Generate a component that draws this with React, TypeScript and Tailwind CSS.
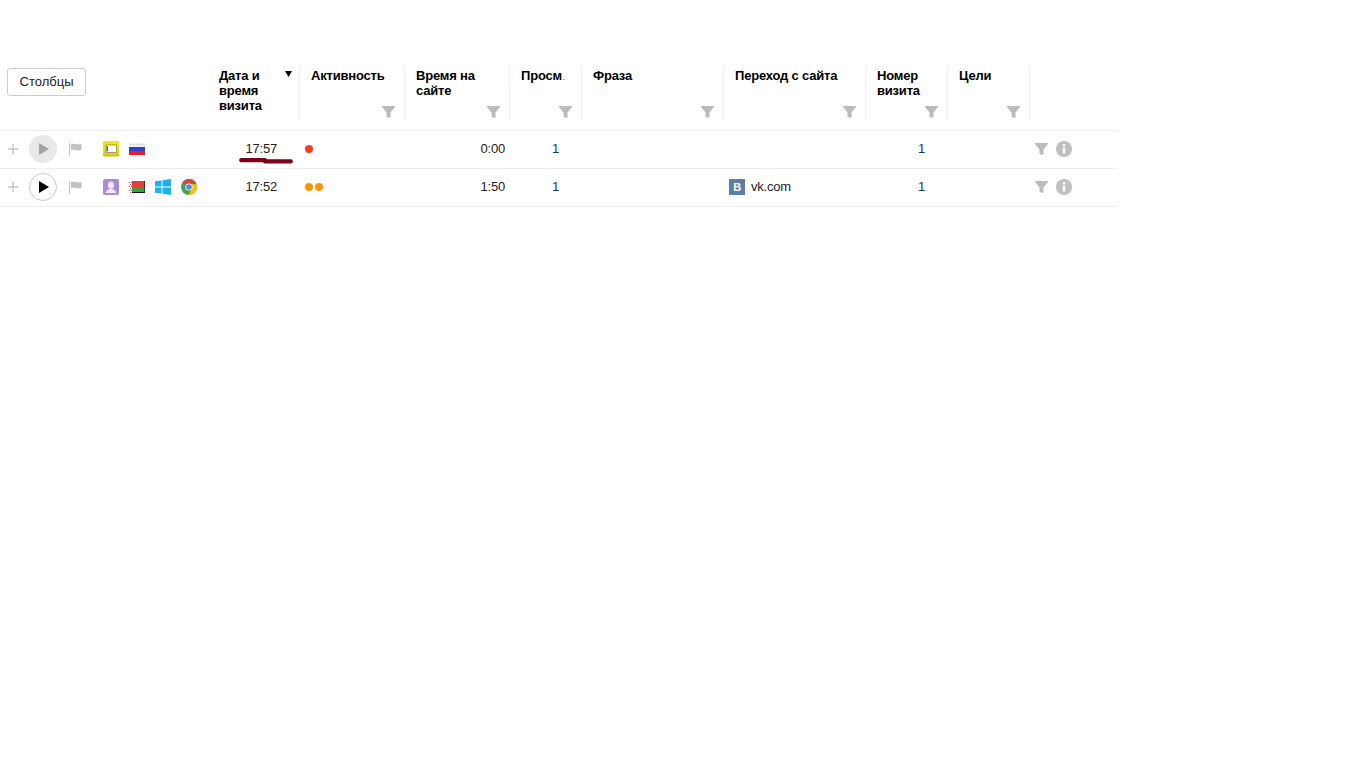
const cols = "grid grid-cols-[208px_92px_105px_105px_72px_142px_142px_82px_82px_88px]";

function Funnel() {
  return (
    <svg width="13" height="12" viewBox="0 0 13 12" className="block shrink-0">
      <path d="M0 0H13V1L8.5 6.5V12L4.5 11V6.5L0 1Z" fill="#bcbcbc" />
    </svg>
  );
}

function Head({ label, dotted, sorted, noFilter, pr }: { label: string; dotted?: boolean; sorted?: boolean; noFilter?: boolean; pr?: string }) {
  return (
    <div className="relative flex h-[54px] flex-col border-r border-[#eeeeee] pl-[11px] pr-[9px] pt-[2px]">
      <div className={`font-bold leading-[15px] tracking-[-0.2px] text-black ${pr ?? ""}`}>
        {label}
        {dotted && <span className="font-normal text-[#999999]">.</span>}
      </div>
      {sorted && (
        <svg width="7" height="6" viewBox="0 0 7 6" className="absolute right-[7px] top-[5px]">
          <path d="M0 0H7L3.5 6Z" fill="#000000" />
        </svg>
      )}
      {!noFilter && (
        <div className="mb-[2px] mt-auto self-end">
          <Funnel />
        </div>
      )}
    </div>
  );
}

function Plus() {
  return (
    <svg width="10" height="10" viewBox="0 0 10 10" className="block">
      <path d="M5 0V10M0 5H10" stroke="#c4c4c4" strokeWidth="1.4" />
    </svg>
  );
}

function Play({ active }: { active: boolean }) {
  return (
    <div className={`flex h-[28px] w-[28px] items-center justify-center rounded-full ${active ? "border border-[#c9c9c9] bg-white" : "bg-[#e8e8e8]"}`}>
      <svg width="10" height="12" viewBox="0 0 10 12" className="ml-[1px] block">
        <path d="M0 0L10 6L0 12Z" fill={active ? "#000000" : "#a3a3a3"} />
      </svg>
    </div>
  );
}

function Flag() {
  return (
    <svg width="13" height="13" viewBox="0 0 13 13" className="block">
      <path d="M0.5 0V13" stroke="#c2c2c2" strokeWidth="1" />
      <path d="M2 1.2C5 0 7 2.4 12.5 1V7C7 8.4 5 6 2 7.2Z" fill="#c2c2c2" />
    </svg>
  );
}

function YellowIcon() {
  return (
    <svg width="16" height="16" viewBox="0 0 16 16" className="block">
      <defs>
        <linearGradient id="yg" x1="0" y1="0" x2="0" y2="1">
          <stop offset="0" stopColor="#f4ea00" />
          <stop offset="0.7" stopColor="#ece000" />
          <stop offset="1" stopColor="#c8bc20" />
        </linearGradient>
      </defs>
      <rect width="16" height="15.5" rx="1" fill="url(#yg)" />
      <rect x="3" y="4" width="10.5" height="7.5" fill="#ffffff" stroke="#8a8a70" strokeWidth="0.8" />
      <rect x="3.6" y="5.2" width="1.2" height="5" fill="#444444" />
    </svg>
  );
}

function Russia() {
  return (
    <svg width="16" height="12" viewBox="0 0 16 12" className="block">
      <rect width="16" height="4" fill="#f0f0f0" />
      <rect y="1" width="16" height="1" fill="#dddddd" />
      <rect y="4" width="16" height="4" fill="#2a3fd8" />
      <rect y="8" width="16" height="4" fill="#ee1c25" />
    </svg>
  );
}

function Belarus() {
  return (
    <svg width="16" height="12" viewBox="0 0 16 12" className="block">
      <rect width="16" height="12" fill="#111111" />
      <rect x="0" y="0" width="15.4" height="7" fill="#ee3b3b" />
      <rect x="0" y="7" width="15.4" height="4" fill="#3f9e3f" />
      <rect x="0" y="0" width="3" height="12" fill="#ffffff" />
      <path d="M0 1H1V2H0ZM2 1H3V2H2ZM1 3H2V4H1ZM0 5H1V6H0ZM2 5H3V6H2ZM1 7H2V8H1ZM0 9H1V10H0ZM2 9H3V10H2ZM1 11H2V12H1Z" fill="#e8424a" />
    </svg>
  );
}

function Person() {
  return (
    <svg width="16" height="16" viewBox="0 0 16 16" className="block">
      <rect width="16" height="16" rx="2" fill="#ab8ad8" />
      <ellipse cx="8" cy="6.2" rx="3" ry="3.6" fill="#efe7f8" />
      <path d="M2.5 14C3 11.4 5.6 11 6.6 9.8H9.4C10.4 11 13 11.4 13.5 14Z" fill="#efe7f8" />
    </svg>
  );
}

function Windows() {
  return (
    <svg width="16" height="16" viewBox="0 0 16 16" className="block">
      <path d="M0 2.3L6.6 1.4V7.6H0ZM7.5 1.2L16 0V7.6H7.5ZM0 8.5H6.6V14.6L0 13.7ZM7.5 8.5H16V16L7.5 14.8Z" fill="#1cb1ec" />
    </svg>
  );
}

function Chrome() {
  return (
    <svg width="16" height="16" viewBox="0 0 16 16" className="block">
      <circle cx="8" cy="8" r="8" fill="#4a9e4f" />
      <path d="M8 0A8 8 0 0 1 15.4 5H8A3 3 0 0 0 5.2 6.9L2 2.6A8 8 0 0 1 8 0Z" fill="#db4437" />
      <path d="M15.4 5A8 8 0 0 1 7.4 16L10.6 10A3 3 0 0 0 11 8 3 3 0 0 0 10 5.4Z" fill="#f4c20d" />
      <circle cx="8" cy="8" r="3.6" fill="#ffffff" />
      <circle cx="8" cy="8" r="2.8" fill="#4b87e6" />
    </svg>
  );
}

function Info() {
  return (
    <svg width="16" height="16" viewBox="0 0 16 16" className="block">
      <circle cx="8" cy="8" r="8" fill="#bfbfbf" />
      <rect x="6.8" y="3" width="2.4" height="2.4" fill="#ffffff" />
      <rect x="6.8" y="6.6" width="2.4" height="6" fill="#ffffff" />
    </svg>
  );
}

function VK() {
  return (
    <span className="flex h-[16px] w-[16px] items-center justify-center bg-[#5b7fa6] text-[11px] font-bold leading-none text-white">
      B
    </span>
  );
}

function Dot({ color }: { color: string }) {
  return <span className={`block h-[8px] w-[8px] rounded-full ${color}`} />;
}

function Row({ active, icons, time, dots, duration, referer, underline }: { active: boolean; icons: React.ReactNode; time: string; dots: string[]; duration: string; referer?: boolean; underline?: boolean }) {
  return (
    <div className={`${cols} h-[38px] items-center border-b border-[#eeeeee] pb-[1px] leading-[16px] tracking-[-0.2px]`}>
      <div className="flex items-center pl-[8px]">
        <Plus />
        <div className="ml-[11px]"><Play active={active} /></div>
        <div className="ml-[12px]"><Flag /></div>
        <div className="ml-[21px] flex items-center gap-[10px]">{icons}</div>
      </div>
      <div className="relative pr-[23px] text-right text-[#222222]">
        {time}
        {underline && (
          <svg width="54" height="7" viewBox="0 0 54 7" className="absolute left-[31px] top-[17px]">
            <path d="M2.2 2.2H26M26 3.4H51.8" stroke="#7b0019" strokeWidth="4.2" strokeLinecap="round" />
          </svg>
        )}
      </div>
      <div className="flex gap-[2px] pl-[5px]">
        {dots.map((d, i) => (
          <Dot key={i} color={d} />
        ))}
      </div>
      <div className="pr-[5px] text-right text-[#222222]">{duration}</div>
      <div className="pr-[23px] text-right text-[#0a3a66]">1</div>
      <div />
      <div className="flex items-center gap-[6px] pl-[5px]">
        {referer && (
          <>
            <VK />
            <span className="text-[#222222]">vk.com</span>
          </>
        )}
      </div>
      <div className="pr-[23px] text-right text-[#0a3a66]">1</div>
      <div />
      <div className="flex items-center gap-[8px] pl-[5px]">
        <Funnel />
        <Info />
      </div>
    </div>
  );
}

export default function App() {
  return (
    <div className="min-h-[768px] w-[1366px] bg-white pt-[66px] font-['Liberation_Sans',Arial,sans-serif] text-[13px]">
      <div className="w-[1118px]">
        <div className={`${cols} h-[65px] items-start border-b border-[#eeeeee]`}>
          <div className="pl-[7px] pt-[2px]">
            <button className="h-[28px] w-[79px] rounded-[3px] border border-[#cccccc] bg-white text-center text-[13px] leading-[26px] text-[#222222]">
              Столбцы
            </button>
          </div>
          <Head label="Дата и время визита" sorted noFilter pr="w-[50px]" />
          <Head label="Активность" />
          <Head label="Время на сайте" />
          <Head label="Просм" dotted />
          <Head label="Фраза" />
          <Head label="Переход с сайта" />
          <Head label="Номер визита" />
          <Head label="Цели" />
          <div />
        </div>
        <Row
          active={false}
          time="17:57"
          underline
          duration="0:00"
          dots={["bg-[#ff3b1f]"]}
          icons={
            <>
              <YellowIcon />
              <Russia />
            </>
          }
        />
        <Row
          active
          time="17:52"
          duration="1:50"
          referer
          dots={["bg-[#ff9500]", "bg-[#ff9500]"]}
          icons={
            <>
              <Person />
              <Belarus />
              <Windows />
              <Chrome />
            </>
          }
        />
      </div>
    </div>
  );
}
